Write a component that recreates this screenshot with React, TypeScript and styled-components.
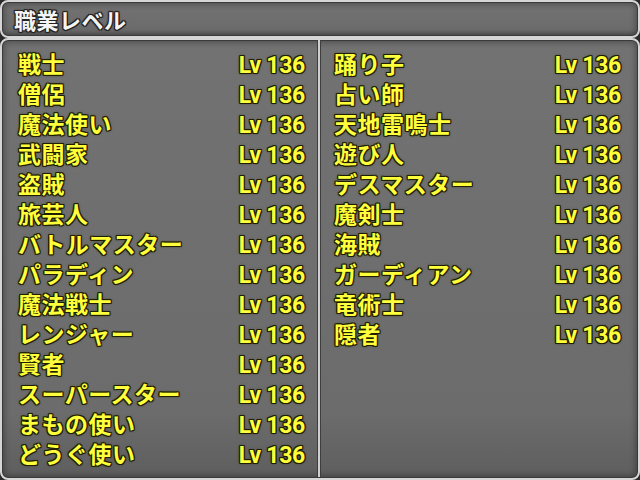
import React from "react";
import styled, { createGlobalStyle } from "styled-components";

const GlobalStyle = createGlobalStyle`
  html, body {
    margin: 0;
    padding: 0;
    background: #2a2a2a;
  }
  #root {
    width: 640px;
    height: 480px;
  }
`;

const leftJobs = [
  "戦士",
  "僧侶",
  "魔法使い",
  "武闘家",
  "盗賊",
  "旅芸人",
  "バトルマスター",
  "パラディン",
  "魔法戦士",
  "レンジャー",
  "賢者",
  "スーパースター",
  "まもの使い",
  "どうぐ使い",
];

const rightJobs = [
  "踊り子",
  "占い師",
  "天地雷鳴士",
  "遊び人",
  "デスマスター",
  "魔剣士",
  "海賊",
  "ガーディアン",
  "竜術士",
  "隠者",
];

const App: React.FC = () => {
  return (
    <>
      <GlobalStyle />
      <Screen>
        <TitleWindow>
          <Title>職業レベル</Title>
        </TitleWindow>
        <MainWindow>
          <Column>
            {leftJobs.map((job) => (
              <Row key={job}>
                <JobName>{job}</JobName>
                <Level>Lv 136</Level>
              </Row>
            ))}
          </Column>
          <Divider />
          <Column $right>
            {rightJobs.map((job) => (
              <Row key={job}>
                <JobName>{job}</JobName>
                <Level>Lv 136</Level>
              </Row>
            ))}
          </Column>
        </MainWindow>
      </Screen>
    </>
  );
};
export default App;

const outline = (c: string) =>
  `1px 1px 0 ${c}, -1px -1px 0 ${c}, 1px -1px 0 ${c}, -1px 1px 0 ${c}, 0 1px 0 ${c}, 1px 0 0 ${c}, 0 -1px 0 ${c}, -1px 0 0 ${c}, 0 0 3px ${c}`;

const Screen = styled.div`
  width: 640px;
  height: 480px;
  display: flex;
  flex-direction: column;
  font-family: "Noto Sans CJK JP", "Noto Sans", sans-serif;
  font-weight: 700;
`;

const Window = styled.div`
  box-sizing: border-box;
  background: linear-gradient(#727272, #6c6c6c 85%, #5e5e5e);
  border: 2px solid #d6d6d6;
  border-radius: 8px;
  box-shadow: inset 0 0 0 1px #3a3a3a, inset 0 0 6px 2px rgba(0, 0, 0, 0.35);
`;

const TitleWindow = styled(Window)`
  height: 38px;
  display: flex;
  align-items: center;
  padding-left: 12px;
`;

const Title = styled.div`
  color: #f4f4f4;
  font-size: 22px;
  line-height: 26px;
  letter-spacing: 0.5px;
  text-shadow: ${outline("#222")};
`;

const MainWindow = styled(Window)`
  height: 442px;
  display: flex;
`;

const Column = styled.div<{ $right?: boolean }>`
  flex: 1;
  display: flex;
  flex-direction: column;
  padding: 8px ${(p) => (p.$right ? "17px" : "13px")} 0
    ${(p) => (p.$right ? "14px" : "16px")};
`;

const Divider = styled.div`
  width: 2px;
  background: #d0d0d0;
  box-shadow: -1px 0 0 #3e3e3e, 1px 0 0 #3e3e3e;
  margin-bottom: 1px;
`;

const Row = styled.div`
  box-sizing: border-box;
  height: 30px;
  padding-top: 2px;
  display: flex;
  align-items: baseline;
  justify-content: space-between;
  color: #ffff3c;
  text-shadow: ${outline("#1e1e00")};
`;

const JobName = styled.span`
  font-size: 23px;
  line-height: 26px;
  letter-spacing: 0.5px;
`;

const Level = styled.span`
  font-family: Roboto, "Liberation Sans", sans-serif;
  font-size: 23px;
  line-height: 26px;
  letter-spacing: -0.3px;
`;
